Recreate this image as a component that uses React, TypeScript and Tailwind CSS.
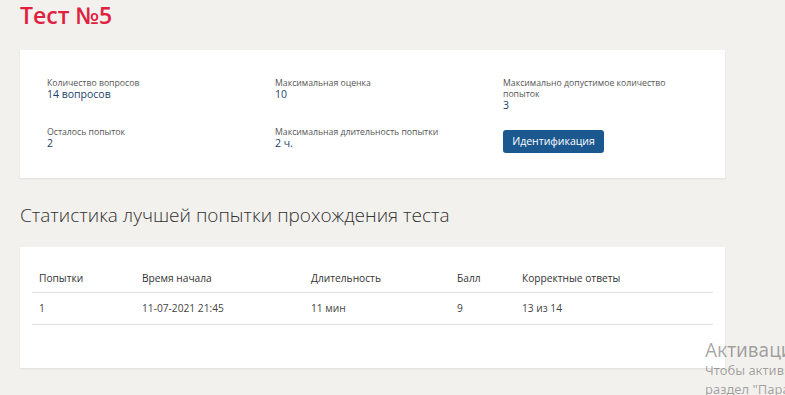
import { FC } from "react";

const info = [
    { label: "Количество вопросов", value: "14 вопросов" },
    { label: "Максимальная оценка", value: "10" },
    { label: "Максимально допустимое количество попыток", value: "3" },
    { label: "Осталось попыток", value: "2" },
    { label: "Максимальная длительность попытки", value: "2 ч." },
];

const cols = ["w-[103px]", "w-[169px]", "w-[146px]", "w-[65px]", "flex-1"];
const head = ["Попытки", "Время начала", "Длительность", "Балл", "Корректные ответы"];
const row = ["1", "11-07-2021 21:45", "11 мин", "9", "13 из 14"];

const App: FC = () => {
    return (
        <div className="relative w-[785px] h-[395px] overflow-hidden bg-[#f2f1ee] font-['Open_Sans',sans-serif] text-[#333]">
            <div className="pl-5 pr-[60px]">
                <h1 className="h-[50px] text-[23px] font-semibold text-[#e0203f] leading-[30px]">
                    Тест №5
                </h1>

                <div className="bg-white shadow-[0_1px_2px_rgba(0,0,0,0.08)] pl-[27px] pt-[28px] h-[128px]">
                    <div className="grid grid-cols-[228px_228px_165px] gap-y-[16px]">
                        {info.map(item => (
                            <div key={item.label} className="leading-[11px]">
                                <div className="text-[8.7px] text-[#555]">{item.label}</div>
                                <div className="text-[10.5px] text-[#1d3f6b]">{item.value}</div>
                            </div>
                        ))}
                        <div>
                            <button className="mt-[-8px] h-[23px] w-[101px] rounded-[3px] bg-[#1b5890] text-[10.5px] text-white">
                                Идентификация
                            </button>
                        </div>
                    </div>
                </div>

                <h2 className="mt-[25px] text-[19px] font-light text-[#333] leading-[24px]">
                    Статистика лучшей попытки прохождения теста
                </h2>

                <div className="mt-[20px] bg-white shadow-[0_1px_2px_rgba(0,0,0,0.08)] px-3 pt-[18px] h-[121px]">
                    <div className="flex h-[28px] items-center border-b border-[#e2e2e2] text-[10.2px] text-[#333]">
                        {head.map((h, i) => (
                            <div key={h} className={`${cols[i]} pl-[7px]`}>{h}</div>
                        ))}
                    </div>
                    <div className="flex h-[32px] items-center border-b border-[#e2e2e2] text-[10.2px] text-[#444]">
                        {row.map((c, i) => (
                            <div key={i} className={`${cols[i]} pl-[7px]`}>{c}</div>
                        ))}
                    </div>
                </div>
            </div>

            <div className="absolute left-[705px] top-[339px] whitespace-nowrap font-['Noto_Sans',sans-serif] text-[#000]/35">
                <div className="text-[19px] leading-[22px]">Активация Windows</div>
                <div className="text-[13px] leading-[19px]">Чтобы активировать Windows, перейдите в</div>
                <div className="text-[13px] leading-[19px]">раздел "Параметры".</div>
            </div>
        </div>
    );
};

export default App;
